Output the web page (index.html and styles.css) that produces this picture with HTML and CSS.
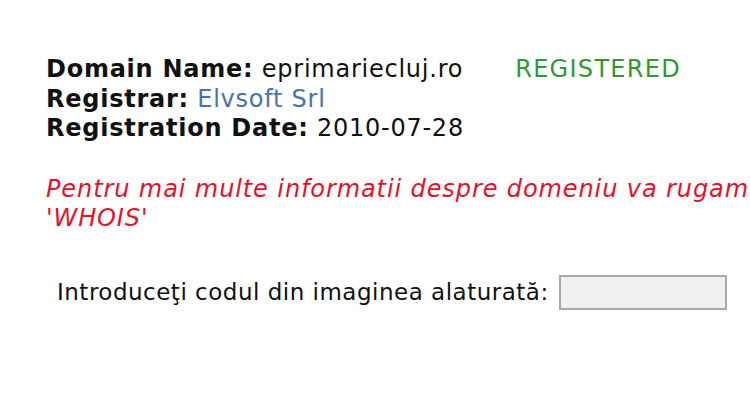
FILE: index.html
```html
<!DOCTYPE html>
<html>
<head>
<meta charset="utf-8">
<link rel="stylesheet" href="styles.css">
</head>
<body>
<div class="page">
  <div class="info">
    <div class="row">
      <div class="field"><b>Domain Name:</b> eprimariecluj.ro</div>
      <div class="status">REGISTERED</div>
    </div>
    <div class="field"><b>Registrar:</b> <a class="link" href="#">Elvsoft Srl</a></div>
    <div class="field"><b>Registration Date:</b> 2010-07-28</div>
  </div>
  <p class="note">Pentru mai multe informatii despre domeniu va rugam accesati sectiunea<br>'WHOIS'</p>
  <div class="captcha">
    <label class="captcha-label" for="code">Introduceţi codul din imaginea alaturată:</label>
    <input class="captcha-input" id="code" type="text">
  </div>
</div>
</body>
</html>
```
FILE: styles.css
```css
html, body {
  margin: 0;
  padding: 0;
  background: #ffffff;
  overflow: hidden;
}
body {
  font-family: "DejaVu Sans", Verdana, sans-serif;
  color: #111111;
}
.page {
  width: 1200px;
  padding: 55px 0 0 46px;
}
.info {
  font-size: 24px;
  line-height: 29.5px;
  letter-spacing: 0.75px;
}
.row {
  display: flex;
}
.field {
  white-space: nowrap;
}
.status {
  margin-left: 52px;
  color: #2f9a2f;
  letter-spacing: 1.3px;
}
.link {
  color: #4a72b0;
  text-decoration: none;
}
.note {
  margin: 31px 0 0 0;
  font-size: 24px;
  line-height: 29.5px;
  font-style: italic;
  letter-spacing: 0.9px;
  color: #e8102a;
  white-space: nowrap;
}
.captcha {
  display: flex;
  align-items: center;
  margin: 41px 0 0 11px;
  font-size: 23px;
  letter-spacing: 0.5px;
}
.captcha-label {
  white-space: nowrap;
}
.captcha-input {
  box-sizing: border-box;
  width: 168px;
  height: 35px;
  margin-left: 10px;
  border: 2px solid #a8a8a8;
  background: #f0f0f0;
}
```
